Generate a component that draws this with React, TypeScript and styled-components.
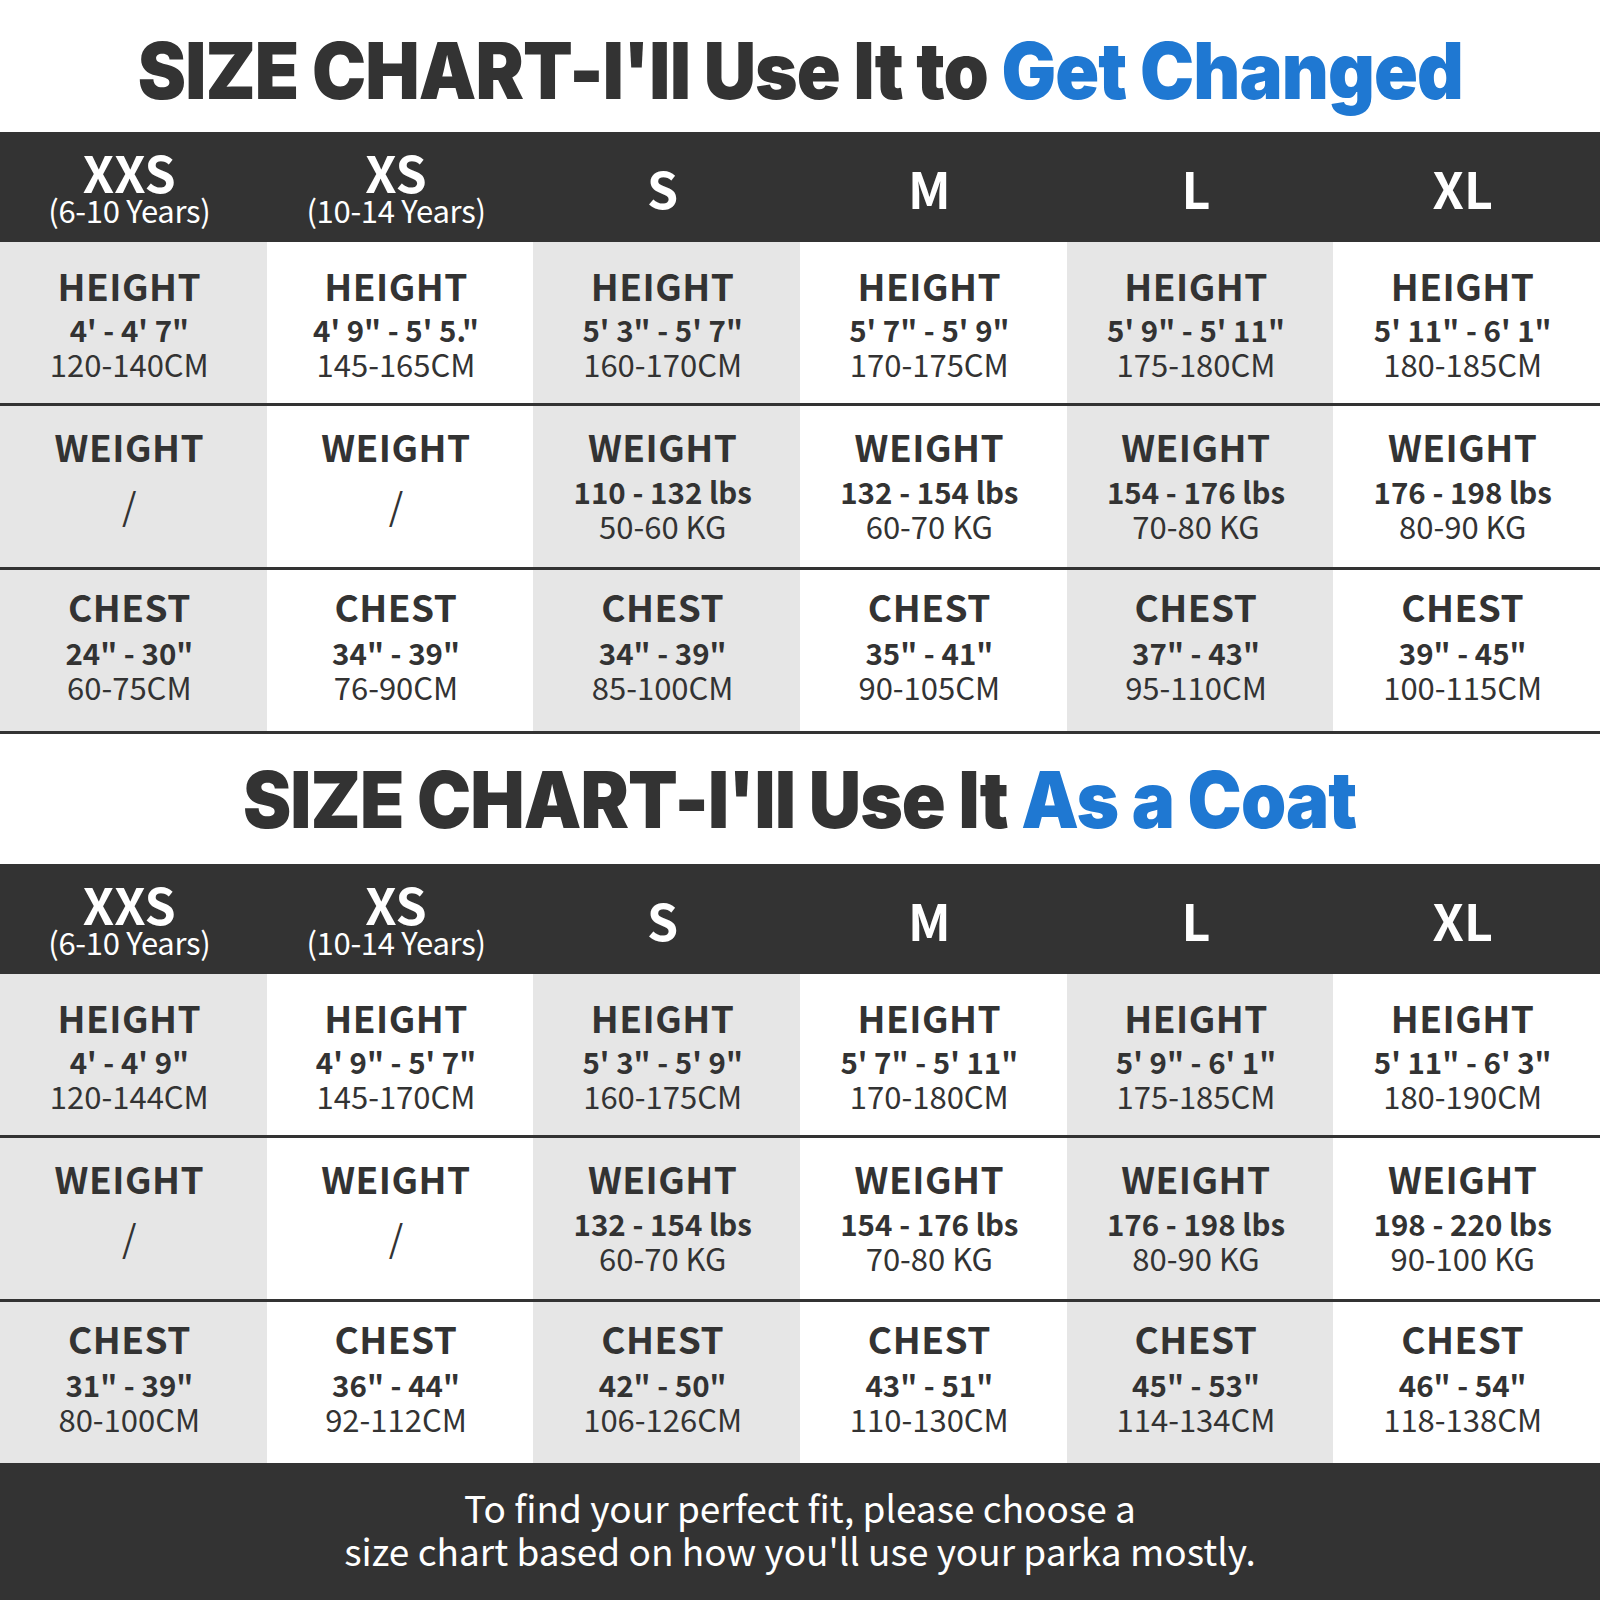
import React from "react";
import styled, { createGlobalStyle } from "styled-components";

const GlobalStyle = createGlobalStyle`
  html, body { margin: 0; padding: 0; background: #ffffff; }
  #root { width: 1600px; }
`;

const DARK = "#333333";
const GRAY = "#e6e6e6";
const BLUE = "#1f78d2";
const BODY_FONT = `"Noto Sans CJK SC", "Noto Sans", sans-serif`;

const Page = styled.div`
  width: 1600px;
  background: #ffffff;
  display: flex;
  flex-direction: column;
`;

const TitleBar = styled.div<{ $h: number; $drop: number }>`
  height: ${(p) => p.$h}px;
  padding-top: ${(p) => p.$drop}px;
  box-sizing: border-box;
  display: flex;
  align-items: center;
  justify-content: center;
`;

const Title = styled.h1`
  margin: 0;
  font-family: Inter, "Liberation Sans", sans-serif;
  font-weight: 900;
  font-size: 78px;
  line-height: 1;
  letter-spacing: -1px;
  color: ${DARK};
  white-space: nowrap;
  transform: scaleX(0.93);
`;

const Accent = styled.span`
  color: ${BLUE};
`;

const Grid = styled.div`
  display: grid;
  grid-template-columns: repeat(6, 1fr);
`;

const HeaderRow = styled(Grid)`
  height: 110px;
  background: ${DARK};
`;

const SizeCell = styled.div`
  display: flex;
  flex-direction: column;
  align-items: center;
  justify-content: center;
  padding-right: 8px;
  color: #ffffff;
  font-family: ${BODY_FONT};
`;

const SizeName = styled.div`
  font-weight: 700;
  font-size: 50px;
  line-height: 46px;
`;

const SizeAge = styled.div`
  font-weight: 400;
  font-size: 31px;
  line-height: 32px;
  letter-spacing: -0.3px;
`;

const DataRow = styled(Grid)<{ $line: boolean }>`
  height: 161px;
  border-bottom: ${(p) => (p.$line ? `3px solid ${DARK}` : "none")};
`;

const Cell = styled.div<{ $shade: boolean; $top: number }>`
  background: ${(p) => (p.$shade ? GRAY : "#ffffff")};
  display: flex;
  flex-direction: column;
  align-items: center;
  padding-top: ${(p) => p.$top}px;
  padding-right: 8px;
  box-sizing: border-box;
  color: ${DARK};
  font-family: ${BODY_FONT};
`;

const Label = styled.div`
  font-weight: 700;
  font-size: 37px;
  line-height: 40px;
  letter-spacing: 0.5px;
`;

const Values = styled.div<{ $gap: number }>`
  height: 72px;
  margin-top: ${(p) => p.$gap}px;
  display: flex;
  flex-direction: column;
  align-items: center;
  justify-content: center;
`;

const Imperial = styled.div`
  font-weight: 700;
  font-size: 29.5px;
  line-height: 34px;
`;

const Metric = styled.div`
  font-weight: 400;
  font-size: 31px;
  line-height: 36px;
`;

const Slash = styled.div`
  font-weight: 400;
  font-size: 37px;
  line-height: 44px;
  padding-bottom: 10px;
`;

const Footer = styled.div`
  height: 138px;
  padding-bottom: 6px;
  box-sizing: border-box;
  background: ${DARK};
  display: flex;
  flex-direction: column;
  align-items: center;
  justify-content: center;
  color: #ffffff;
  font-family: ${BODY_FONT};
  font-size: 37px;
  line-height: 43px;
`;

type Measure = { imp: string; met: string } | null;
type Row = { label: string; top: number; gap: number; values: Measure[] };
type Chart = { rows: Row[] };

const sizes: { name: string; age?: string }[] = [
  { name: "XXS", age: "(6-10 Years)" },
  { name: "XS", age: "(10-14 Years)" },
  { name: "S" },
  { name: "M" },
  { name: "L" },
  { name: "XL" },
];

const m = (imp: string, met: string): Measure => ({ imp, met });

const changedChart: Chart = {
  rows: [
    {
      label: "HEIGHT",
      top: 23,
      gap: 6,
      values: [
        m(`4' - 4' 7"`, "120-140CM"),
        m(`4' 9" - 5' 5."`, "145-165CM"),
        m(`5' 3" - 5' 7"`, "160-170CM"),
        m(`5' 7" - 5' 9"`, "170-175CM"),
        m(`5' 9" - 5' 11"`, "175-180CM"),
        m(`5' 11" - 6' 1"`, "180-185CM"),
      ],
    },
    {
      label: "WEIGHT",
      top: 20,
      gap: 7,
      values: [
        null,
        null,
        m("110 - 132 lbs", "50-60 KG"),
        m("132 - 154 lbs", "60-70 KG"),
        m("154 - 176 lbs", "70-80 KG"),
        m("176 - 198 lbs", "80-90 KG"),
      ],
    },
    {
      label: "CHEST",
      top: 16,
      gap: 8,
      values: [
        m(`24" - 30"`, "60-75CM"),
        m(`34" - 39"`, "76-90CM"),
        m(`34" - 39"`, "85-100CM"),
        m(`35" - 41"`, "90-105CM"),
        m(`37" - 43"`, "95-110CM"),
        m(`39" - 45"`, "100-115CM"),
      ],
    },
  ],
};

const coatChart: Chart = {
  rows: [
    {
      label: "HEIGHT",
      top: 23,
      gap: 6,
      values: [
        m(`4' - 4' 9"`, "120-144CM"),
        m(`4' 9" - 5' 7"`, "145-170CM"),
        m(`5' 3" - 5' 9"`, "160-175CM"),
        m(`5' 7" - 5' 11"`, "170-180CM"),
        m(`5' 9" - 6' 1"`, "175-185CM"),
        m(`5' 11" - 6' 3"`, "180-190CM"),
      ],
    },
    {
      label: "WEIGHT",
      top: 20,
      gap: 7,
      values: [
        null,
        null,
        m("132 - 154 lbs", "60-70 KG"),
        m("154 - 176 lbs", "70-80 KG"),
        m("176 - 198 lbs", "80-90 KG"),
        m("198 - 220 lbs", "90-100 KG"),
      ],
    },
    {
      label: "CHEST",
      top: 16,
      gap: 8,
      values: [
        m(`31" - 39"`, "80-100CM"),
        m(`36" - 44"`, "92-112CM"),
        m(`42" - 50"`, "106-126CM"),
        m(`43" - 51"`, "110-130CM"),
        m(`45" - 53"`, "114-134CM"),
        m(`46" - 54"`, "118-138CM"),
      ],
    },
  ],
};

function SizeTable({ chart, lastLine }: { chart: Chart; lastLine: boolean }) {
  return (
    <>
      <HeaderRow>
        {sizes.map((s) => (
          <SizeCell key={s.name}>
            <SizeName>{s.name}</SizeName>
            {s.age && <SizeAge>{s.age}</SizeAge>}
          </SizeCell>
        ))}
      </HeaderRow>
      {chart.rows.map((row, ri) => (
        <DataRow key={row.label} $line={ri < chart.rows.length - 1 || lastLine}>
          {row.values.map((v, ci) => (
            <Cell key={ci} $shade={ci % 2 === 0} $top={row.top}>
              <Label>{row.label}</Label>
              <Values $gap={row.gap}>
                {v ? (
                  <>
                    <Imperial>{v.imp}</Imperial>
                    <Metric>{v.met}</Metric>
                  </>
                ) : (
                  <Slash>/</Slash>
                )}
              </Values>
            </Cell>
          ))}
        </DataRow>
      ))}
    </>
  );
}

export default function App() {
  return (
    <Page>
      <GlobalStyle />
      <TitleBar $h={132} $drop={10}>
        <Title>
          SIZE CHART-I'll Use It to <Accent>Get Changed</Accent>
        </Title>
      </TitleBar>
      <SizeTable chart={changedChart} lastLine />
      <TitleBar $h={130} $drop={2}>
        <Title>
          SIZE CHART-I'll Use It <Accent>As a Coat</Accent>
        </Title>
      </TitleBar>
      <SizeTable chart={coatChart} lastLine={false} />
      <Footer>
        <div>To find your perfect fit, please choose a</div>
        <div>size chart based on how you'll use your parka mostly.</div>
      </Footer>
    </Page>
  );
}
